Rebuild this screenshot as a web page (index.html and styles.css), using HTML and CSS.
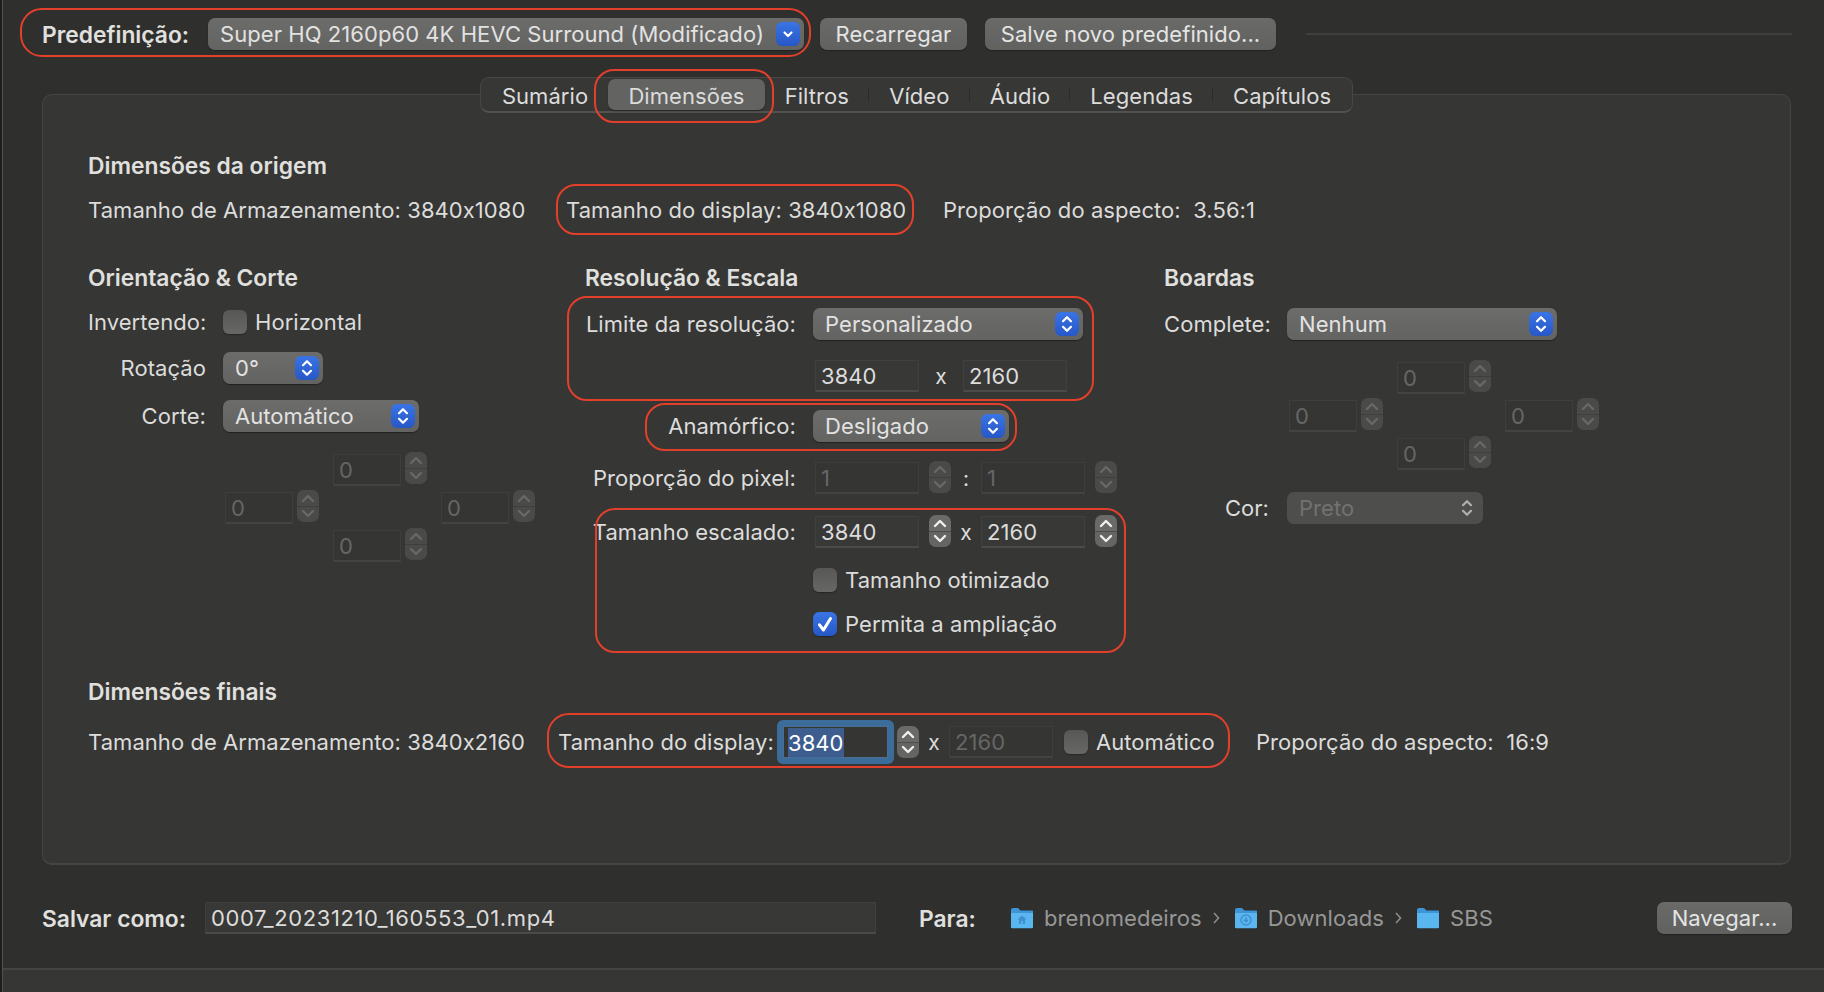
FILE: index.html
```html
<!DOCTYPE html>
<html lang="pt-BR">
<head>
<meta charset="utf-8">
<title>Dimensões</title>
<link rel="stylesheet" href="styles.css">
</head>
<body>
<svg class="defs" width="0" height="0" aria-hidden="true">
  <symbol id="updown" viewBox="0 0 24 24"><path d="M8 9.2 12 5.2 16 9.2M8 14.8 12 18.8 16 14.8" fill="none" stroke="currentColor" stroke-width="2.2" stroke-linecap="round" stroke-linejoin="round"/></symbol>
  <symbol id="down" viewBox="0 0 24 24"><path d="M8.5 10.5 12 14 15.5 10.5" fill="none" stroke="currentColor" stroke-width="2.2" stroke-linecap="round" stroke-linejoin="round"/></symbol>
  <symbol id="step" viewBox="0 0 22 32"><path d="M6 11 11 6 16 11M6 21 11 26 16 21" fill="none" stroke="currentColor" stroke-width="2.4" stroke-linecap="round" stroke-linejoin="round"/></symbol>
  <symbol id="folder" viewBox="0 0 24 22"><path d="M1 3.2C1 1.900 1.900 1 3.200 1H8l2.400 2.600H22c.7 0 1 .4 1 1V7H1Z" fill="#3d94d6"/><path d="M1 6h22v14c0 .8-.4 1.200-1.200 1.200H2.200C1.400 21.200 1 20.800 1 20Z" fill="#5ab6ee"/></symbol>
</svg>
<div class="window">
  <header class="toolbar">
    <span class="bold preset-label">Predefinição:</span>
    <div class="popup preset"><span>Super HQ 2160p60 4K HEVC Surround (Modificado)</span><i class="blue"><svg><use href="#down"/></svg></i></div>
    <button class="btn reload">Recarregar</button>
    <button class="btn save">Salve novo predefinido...</button>
    <div class="rule"></div>
  </header>

  <main class="panel">
    <nav class="tabs">
      <span class="tab">Sumário</span>
      <span class="tab on">Dimensões</span>
      <span class="tab sep">Filtros</span>
      <span class="tab sep">Vídeo</span>
      <span class="tab sep">Áudio</span>
      <span class="tab sep">Legendas</span>
      <span class="tab">Capítulos</span>
    </nav>

    <h2 class="bold head-origin">Dimensões da origem</h2>
    <div class="info src">
      <span class="i1">Tamanho de Armazenamento: 3840x1080</span>
      <span class="i2">Tamanho do display: 3840x1080</span>
      <span>Proporção do aspecto:&nbsp; 3.56:1</span>
    </div>

    <div class="columns">
      <section class="col c1">
        <h2 class="bold">Orientação &amp; Corte</h2>
        <div class="row m16"><label>Invertendo:</label><span class="check"></span><span class="chk-text">Horizontal</span></div>
        <div class="row m14"><label>Rotação</label><div class="popup w100"><span>0°</span><i class="blue"><svg><use href="#updown"/></svg></i></div></div>
        <div class="row m16"><label>Corte:</label><div class="popup w196"><span>Automático</span><i class="blue"><svg><use href="#updown"/></svg></i></div></div>
        <div class="cross cross1">
          <div class="cell top"><span class="field off small">0</span><span class="stepper off"><svg><use href="#step"/></svg></span></div>
          <div class="cell left"><span class="field off small">0</span><span class="stepper off"><svg><use href="#step"/></svg></span></div>
          <div class="cell right"><span class="field off small">0</span><span class="stepper off"><svg><use href="#step"/></svg></span></div>
          <div class="cell bottom"><span class="field off small">0</span><span class="stepper off"><svg><use href="#step"/></svg></span></div>
        </div>
      </section>

      <section class="col c2">
        <h2 class="bold">Resolução &amp; Escala</h2>
        <div class="row m18"><label>Limite da resolução:</label><div class="popup w270"><span>Personalizado</span><i class="blue"><svg><use href="#updown"/></svg></i></div></div>
        <div class="row m20 pad2"><span class="field">3840</span><span class="by wide">x</span><span class="field">2160</span></div>
        <div class="row m18"><label>Anamórfico:</label><div class="popup w196"><span>Desligado</span><i class="blue"><svg><use href="#updown"/></svg></i></div></div>
        <div class="row m20 pad2 dim-row"><label>Proporção do pixel:</label><span class="field off">1</span><span class="stepper off"><svg><use href="#step"/></svg></span><span class="by colon">:</span><span class="field off">1</span><span class="stepper off"><svg><use href="#step"/></svg></span></div>
        <div class="row m22 pad2 dim-row"><label>Tamanho escalado:</label><span class="field">3840</span><span class="stepper"><svg><use href="#step"/></svg></span><span class="by">x</span><span class="field">2160</span><span class="stepper"><svg><use href="#step"/></svg></span></div>
        <div class="row m16 indent"><span class="check"></span><span class="chk-text">Tamanho otimizado</span></div>
        <div class="row m12 indent"><span class="check on"><svg viewBox="0 0 24 24"><path d="M6.500 12.800 10.500 18 17.500 6.500" fill="none" stroke="#fff" stroke-width="3" stroke-linecap="round" stroke-linejoin="round"/></svg></span><span class="chk-text">Permita a ampliação</span></div>
      </section>

      <section class="col c3">
        <h2 class="bold">Boardas</h2>
        <div class="row m18"><label>Complete:</label><div class="popup w270"><span>Nenhum</span><i class="blue"><svg><use href="#updown"/></svg></i></div></div>
        <div class="cross cross3">
          <div class="cell top"><span class="field off small">0</span><span class="stepper off"><svg><use href="#step"/></svg></span></div>
          <div class="cell left"><span class="field off small">0</span><span class="stepper off"><svg><use href="#step"/></svg></span></div>
          <div class="cell right"><span class="field off small">0</span><span class="stepper off"><svg><use href="#step"/></svg></span></div>
          <div class="cell bottom"><span class="field off small">0</span><span class="stepper off"><svg><use href="#step"/></svg></span></div>
        </div>
        <div class="row m22"><label>Cor:</label><div class="popup w196 off"><span>Preto</span><svg class="plain"><use href="#updown"/></svg></div></div>
      </section>
    </div>

    <h2 class="bold head-final">Dimensões finais</h2>
    <div class="info final">
      <span class="f1">Tamanho de Armazenamento: 3840x2160</span>
      <span class="f2">Tamanho do display:</span>
      <span class="focus"><span class="field sel"><b>3840</b></span></span>
      <span class="stepper"><svg><use href="#step"/></svg></span>
      <span class="by f3">x</span>
      <span class="field off dim-h">2160</span>
      <span class="check f4"></span>
      <span class="chk-text f5">Automático</span>
      <span>Proporção do aspecto:&nbsp; 16:9</span>
    </div>
  </main>

  <div class="savebar">
    <span class="bold save-label">Salvar como:</span>
    <span class="field filename">0007_20231210_160553_01.mp4</span>
    <span class="bold to-label">Para:</span>
    <svg class="fold" viewBox="0 0 24 22"><use href="#folder"/><path d="M12 8.500 7.500 12.500H9V17h2.200v-3h1.600v3H15v-4.500h1.500Z" fill="#3f8fd2"/></svg><span class="crumb">brenomedeiros</span><svg class="chev" viewBox="0 0 8 14"><path d="M2 2 6.500 7 2 12" fill="none" stroke="#8c8c8b" stroke-width="1.600"/></svg>
    <svg class="fold" viewBox="0 0 24 22"><use href="#folder"/><circle cx="12" cy="13" r="5" fill="none" stroke="#3f8fd2" stroke-width="1.400"/><path d="M12 10.200v4.300M10 12.800 12 15 14 12.800" fill="none" stroke="#3f8fd2" stroke-width="1.400"/></svg><span class="crumb">Downloads</span><svg class="chev" viewBox="0 0 8 14"><path d="M2 2 6.500 7 2 12" fill="none" stroke="#8c8c8b" stroke-width="1.600"/></svg>
    <svg class="fold" viewBox="0 0 24 22"><use href="#folder"/></svg><span class="crumb">SBS</span>
    <button class="btn browse">Navegar...</button>
  </div>
  <footer class="foot"></footer>

  <div class="mark m-preset"></div>
  <div class="mark m-tab"></div>
  <div class="mark m-src"></div>
  <div class="mark m-limit"></div>
  <div class="mark m-ana"></div>
  <div class="mark m-scale"></div>
  <div class="mark m-final"></div>
</div>
</body>
</html>
```

FILE: styles.css
```css
* { box-sizing: border-box; }
html, body { margin: 0; height: 100%; }
body {
  background: #1e1e1e;
  font-family: Inter, "Liberation Sans", sans-serif;
  font-size: 22px;
  letter-spacing: .06px;
  font-feature-settings: "calt" 0;
  color: #dcdcdb;
  overflow: hidden;
}
.defs { position: absolute; }
h2 { margin: 0; font-size: inherit; }
.bold { font-weight: 600; font-size: 22.800px; letter-spacing: 0; color: #e0e0df; }

.window {
  position: relative;
  margin-left: 2px;
  width: 1822px;
  height: 992px;
  border-left: 1px solid #515150;
  background: #2f2f2e;
  display: flex;
  flex-direction: column;
}

/* toolbar */
.toolbar {
  display: flex;
  align-items: center;
  height: 32px;
  margin-top: 18px;
  padding: 0 32px 0 39px;
}
.preset-label { width: 166px; flex: none; }
.popup {
  position: relative;
  display: flex;
  align-items: center;
  height: 32px;
  flex: none;
  padding-left: 12px;
  border-radius: 7px;
  background: linear-gradient(#6c6c6b, #636362);
  box-shadow: 0 1px 1px #222;
  white-space: nowrap;
  color: #e2e2e1;
}
.popup .blue {
  position: absolute;
  right: 4px;
  top: 4px;
  width: 24px;
  height: 24px;
  border-radius: 6px;
  background: linear-gradient(#3a74e4, #2757c6);
  color: #fff;
}
.blue svg { display: block; width: 24px; height: 24px; }
.preset { width: 596px; }
.btn {
  height: 32px;
  padding: 0;
  border: 0;
  border-radius: 7px;
  background: linear-gradient(#6a6a69, #616160);
  box-shadow: 0 1px 1px #222;
  color: #e4e4e3;
  font: inherit;
  letter-spacing: inherit;
}
.reload { width: 147px; margin-left: 16px; }
.save { width: 291px; margin-left: 18px; }
.rule { flex: 1; height: 2px; margin-left: 30px; background: #3e3e3d; }

/* panel */
.panel {
  display: flex;
  flex-direction: column;
  width: 1749px;
  height: 771px;
  margin: 44px 0 0 39px;
  padding: 0 0 0 45px;
  border: 1px solid #454544;
  border-bottom-width: 2px;
  border-radius: 10px;
  background: #363635;
}
.tabs {
  display: flex;
  align-self: center;
  height: 36px;
  margin: -18px 0 0 -45px;
  padding: 1px;
  border: 1px solid #474746;
  border-bottom: 2px solid #525251;
  border-radius: 9px;
  background: #373736;
}
.tab {
  position: relative;
  display: flex;
  align-items: center;
  padding: 2px 20.100px 0;
  white-space: nowrap;
}
.tab.on {
  border-radius: 7px;
  background: #636362;
  box-shadow: 0 1px 1px #262626;
}
.tab.sep::after {
  content: "";
  position: absolute;
  right: 0;
  top: 8px;
  bottom: 8px;
  width: 1px;
  background: #2c2c2b;
}
.head-origin { margin-top: 41px; line-height: 24px; }
.info { display: flex; align-items: center; white-space: nowrap; }
.src { height: 24px; margin-top: 20px; }
.i1 { width: 478px; }
.i2 { width: 377px; }

.columns { display: flex; margin-top: 44px; height: 374px; }
.col { flex: none; }
.col h2 { line-height: 24px; }
.c1 { width: 497px; }
.c2 { width: 579px; }
.c1 label { width: 118px; margin-right: 17px; }
.c2 label { width: 211px; margin-right: 17px; }
.c3 label { width: 105px; margin-right: 18px; }
label { flex: none; text-align: right; white-space: nowrap; }

.row { display: flex; align-items: center; height: 32px; white-space: nowrap; }
.m12 { margin-top: 12px; }
.m14 { margin-top: 14px; }
.m16 { margin-top: 16px; }
.m18 { margin-top: 18px; }
.m20 { margin-top: 20px; }
.m22 { margin-top: 22px; }
.pad2 { padding-left: 230px; }
.dim-row { padding-left: 0; }
.dim-row label { margin-right: 19px; }
.indent { padding-left: 228px; }

.w100 { width: 100px; }
.w196 { width: 196px; }
.w270 { width: 270px; }
.popup.off { background: #4e4e4d; color: #727271; box-shadow: none; }
.plain { position: absolute; right: 4px; top: 4px; width: 24px; height: 24px; color: #b0b0af; }

.check {
  flex: none;
  width: 24px;
  height: 24px;
  border-radius: 6px;
  background: linear-gradient(#575756, #676766);
  box-shadow: 0 1px 1px #262626;
}
.check.on { background: linear-gradient(#3a74e4, #2757c6); }
.check svg { display: block; width: 24px; height: 24px; }
.chk-text { margin-left: 8px; }

.field {
  display: flex;
  align-items: center;
  flex: none;
  width: 104px;
  height: 32px;
  padding: 1px 0 0 5px;
  background: #383837;
  border: 1px solid #40403f;
  border-bottom: 2px solid #4b4b4a;
}
.field.off { background: #353534; border-color: #3e3e3d; border-bottom-color: #434342; color: #666665; }
.field.small { width: 68px; }
.stepper {
  flex: none;
  width: 22px;
  height: 32px;
  margin: -2px 0 0 10px;
  border-radius: 7px;
  background: linear-gradient(#6a6a69 49%, #4c4c4b 49%, #4c4c4b 53%, #656564 53%);
  color: #f0f0ef;
}
.stepper.off { background: linear-gradient(#4a4a49 49%, #3e3e3d 49%, #3e3e3d 53%, #4a4a49 53%); color: #686867; }
.stepper svg { display: block; width: 22px; height: 32px; }
.by { flex: none; width: 30px; text-align: center; font-size: 21px; }
.by.wide { width: 44px; }
.by.colon { width: 30px; }

.cross {
  display: grid;
  grid-template-columns: repeat(3, 94px);
  grid-template-rows: repeat(3, 32px);
  column-gap: 14px;
  row-gap: 6px;
  margin-top: 22px;
}
.cross1 { margin-left: 137px; }
.cross3 { margin-left: 125px; }
.cell { display: flex; align-items: flex-start; }
.cell .stepper { margin: 0 0 0 4px; position: relative; top: -2px; }
.cell.top { grid-area: 1 / 2; }
.cell.left { grid-area: 2 / 1; }
.cell.right { grid-area: 2 / 3; }
.cell.bottom { grid-area: 3 / 2; }

.head-final { margin-top: 40px; line-height: 24px; }
.final { height: 32px; margin-top: 22px; }
.f1 { width: 470px; }
.f2 { width: 219px; }
.focus {
  flex: none;
  width: 117px;
  height: 44px;
  padding: 6px;
  margin-right: 3px;
  border-radius: 6px;
  background: #3c6c99;
}
.field.sel { width: 105px; background: #353534; border: 1px solid #4c6d92; padding: 0 0 0 4px; }
.field.sel b { font-weight: 400; color: #fff; background: #3d5d8f; line-height: 28px; padding-top: 1px; }
.final .stepper { margin: -1px 0 0 0; }
.f3 { width: 30px; }
.dim-h { width: 104px; }
.f4 { margin-left: 11px; }
.f5 { width: 160px; flex: none; }

/* save bar */
.savebar { display: flex; align-items: center; height: 32px; margin-top: 37px; padding: 0 32px 0 39px; white-space: nowrap; }
.save-label { width: 163px; flex: none; }
.filename { width: 671px; padding-left: 5px; background: #383837; letter-spacing: .6px; }
.to-label { width: 91px; margin-left: 43px; flex: none; }
.fold { flex: none; width: 24px; height: 22px; margin-right: 10px; }
.crumb { color: #979796; }
.chev { flex: none; width: 8px; height: 14px; margin: 0 14px 0 10px; }
.browse { width: 135px; margin-left: auto; }
.foot { flex: 1; margin-top: 34px; border-top: 2px solid #444443; background: #363635; }

/* hand drawn red marks */
.mark { position: absolute; border: 2px solid #e2402a; pointer-events: none; }
.m-preset { left: 17px; top: 8px; width: 791px; height: 49px; border-radius: 22px; }
.m-tab { left: 591px; top: 69px; width: 180px; height: 54px; border-radius: 20px; }
.m-src { left: 553px; top: 184px; width: 358px; height: 51px; border-radius: 20px; }
.m-limit { left: 564px; top: 296px; width: 527px; height: 105px; border-radius: 20px; }
.m-ana { left: 642px; top: 403px; width: 372px; height: 48px; border-radius: 20px; }
.m-scale { left: 592px; top: 508px; width: 531px; height: 145px; border-radius: 20px; }
.m-final { left: 544px; top: 713px; width: 683px; height: 55px; border-radius: 22px; }
```
